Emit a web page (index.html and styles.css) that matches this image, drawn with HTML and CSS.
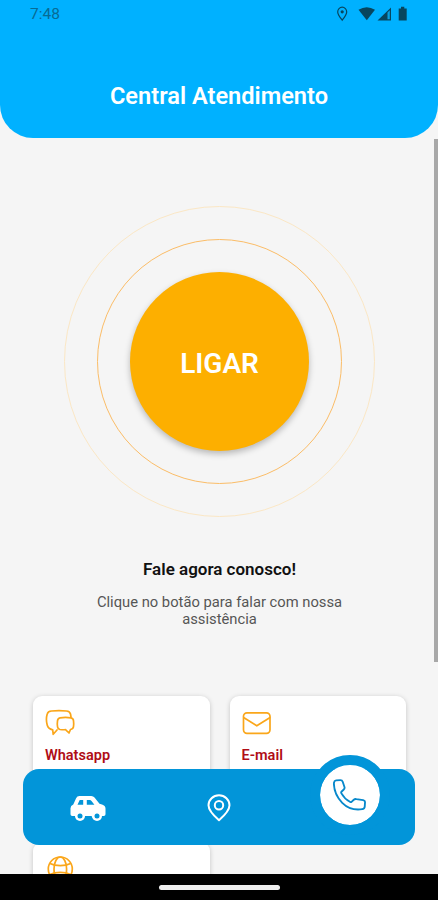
FILE: index.html
```html
<!DOCTYPE html>
<html lang="pt-BR">
  <head>
    <meta charset="UTF-8" />
    <meta name="viewport" content="width=device-width, initial-scale=1.0" />
    <title>Central Atendimento</title>
    <link rel="stylesheet" href="styles.css">
  </head>
  <body>
    <div class="screen">
      <header class="header">
        <div class="status-bar">
          <span class="time">7:48</span>
          <svg class="status-icons" width="74" height="16" viewBox="0 0 74 16">
            <path d="M6.200 14.200C3.700 11 1.700 8.500 1.700 5.900a4.500 4.700 0 0 1 9 0c0 2.600-2 5.100-4.500 8.300z" fill="none" stroke="#07465f" stroke-width="1.200" />
            <circle cx="6.200" cy="5.800" r="1.600" fill="#07465f" />
            <path d="M22.500 3.800Q30.800-1.200 39 3.800L30.800 14.200z" fill="#07465f" />
            <path d="M41.500 14.400L55 1.500v12.900z" fill="#07465f" />
            <path d="M51.500 6.500L53.800 4.300v9h-2.300z" fill="#08a0e0" />
            <path d="M62.700 2.400h2.300V.8h3.300v1.600h2.400v12h-8z" fill="#07465f" />
          </svg>
        </div>
        <h1>Central Atendimento</h1>
      </header>

      <main class="content">
        <div class="ring ring-outer">
          <div class="ring ring-inner">
            <button class="call-button" type="button">LIGAR</button>
          </div>
        </div>

        <h2>Fale agora conosco!</h2>
        <p class="description">Clique no botão para falar com nossa assistência</p>

        <div class="cards">
          <a class="card" href="#">
            <svg width="30" height="28" viewBox="0 0 30 28" fill="none" stroke="#faa61a" stroke-width="1.700" stroke-linejoin="round" stroke-linecap="round">
              <path d="M12 21L8.200 25.300 7.700 20.800C4 20 2.800 18.500 2.200 16 1.200 12.500 1.200 8.500 2.200 5Q2.800 2.300 6.500 2 14 1.300 21.500 2 24.800 2.300 25.500 5L26 8" />
              <path d="M15 8.800q5.500-.9 11 0 2.300.4 2.500 3 .4 3 0 5.700-.2 2.500-3 3L24 24 20.500 20.700q-3 .1-5.500-.2-2.200-.4-2.500-3-.4-3 0-5.700.3-2.600 2.500-3z" />
            </svg>
            <span class="card-title">Whatsapp</span>
          </a>
          <a class="card" href="#">
            <svg width="30" height="28" viewBox="0 0 30 28" fill="none" stroke="#faa61a" stroke-width="1.700" stroke-linejoin="round" stroke-linecap="round">
              <rect x="1.500" y="3.800" width="26.500" height="20.500" rx="3.500" />
              <path d="M2 8.800l12.800 8L27.700 8.800" />
            </svg>
            <span class="card-title">E-mail</span>
          </a>
          <a class="card" href="#">
            <svg width="30" height="28" viewBox="0 0 30 28" fill="none" stroke="#faa61a" stroke-width="1.700">
              <circle cx="15.300" cy="14" r="12" />
              <ellipse cx="15.300" cy="14" rx="6.300" ry="12" />
              <path d="M5 8.500q4 2.200 10.300 2.200T25.600 8.500M5 19.500q4-2.200 10.300-2.200T25.600 19.500" />
            </svg>
          </a>
        </div>
      </main>

      <div class="scrollbar"></div>

      <nav class="tab-bar">
        <a class="tab" href="#">
          <svg width="36" height="27" viewBox="0 0 36 27">
            <path d="M9.500 1h11.800q2 0 3.200 1.500l5 6.300 2.500.7q3.500 1 3.500 4v5.800q0 1.700-1.700 1.700h-3.100a5 5 0 0 1-9.200 0h-6.800a5 5 0 0 1-9.400 0H2.200Q.5 21 .5 19.300v-6q0-2.800 2.800-3.800l2.800-6.300Q7 1 9.500 1z" fill="#fff" />
            <circle cx="10" cy="21" r="5" fill="#fff" />
            <circle cx="27" cy="21" r="5" fill="#fff" />
            <path d="M9.700 5h3.500v4.700H7.500zM16.800 5h3q1 0 1.700.9l2.900 3.800h-7.600z" fill="#0295d9" />
            <circle cx="10" cy="21" r="2.500" fill="#0295d9" />
            <circle cx="27" cy="21" r="2.500" fill="#0295d9" />
          </svg>
        </a>
        <a class="tab" href="#">
          <svg width="24" height="28" viewBox="0 0 24 28" fill="none" stroke="#fff" stroke-width="2" stroke-linejoin="round">
            <path d="M12 26.300C6.500 21.500 1.500 16.500 1.500 11.300a10.500 10 0 0 1 21 0C22.500 16.500 17.500 21.500 12 26.300z" />
            <circle cx="12" cy="11.300" r="4.200" />
          </svg>
        </a>
        <a class="tab tab-active" href="#">
          <svg width="33" height="33" viewBox="0 0 34 34" fill="none" stroke="#0788cb" stroke-width="1.900" stroke-linejoin="round">
            <path d="M3.200 1.500L7.500 1.100Q9.400 1 10 2.800l1.800 5.400q.5 1.500-.7 2.600l-2.400 2.300c-.5.5-.4 1 0 1.700q3.100 5.600 8.700 8.700c.7.500 1.200.5 1.700 0l2.300-2.100q1.200-1 2.700-.7l7 1q2 .4 1.900 2.200l-.3 4.500q-.2 2.300-2.600 2.700Q18 33 9.500 24.500T.9 4.500Q1 1.800 3.200 1.500z" />
          </svg>
        </a>
      </nav>

      <footer class="system-bar">
        <div class="home-handle"></div>
      </footer>
    </div>
  </body>
</html>
```

FILE: styles.css
```css
* {
  box-sizing: border-box;
}

body {
  margin: 0;
  font-family: Roboto, Arial, sans-serif;
  background-color: #f5f5f5;
}

.screen {
  position: relative;
  display: flex;
  flex-direction: column;
  width: 438px;
  height: 900px;
  overflow: hidden;
}

/* Header */
.header {
  flex: none;
  height: 138px;
  background-color: #00b1ff;
  border-radius: 0 0 33px 33px;
  text-align: center;
}

.status-bar {
  display: flex;
  justify-content: space-between;
  align-items: center;
  height: 28px;
  padding: 0 28px 0 30px;
}

.time {
  font-size: 15.5px;
  color: #086b94;
}

h1 {
  margin: 54px 0 0;
  font-size: 23.6px;
  line-height: 28px;
  font-weight: 600;
  color: #fff;
}

/* Content */
.content {
  flex: 1;
  min-height: 0;
  overflow: hidden;
  display: flex;
  flex-direction: column;
  align-items: center;
  padding: 68px 32px 0 33px;
}

.ring {
  flex: none;
  display: flex;
  justify-content: center;
  align-items: center;
  border-radius: 50%;
}

.ring-outer {
  width: 311px;
  height: 311px;
  border: 1px solid #fbe7c5;
}

.ring-inner {
  width: 245px;
  height: 245px;
  border: 1px solid #fbbd68;
}

.call-button {
  width: 179px;
  height: 179px;
  padding: 4px 0 0;
  border: none;
  border-radius: 50%;
  background-color: #fdaf00;
  box-shadow: 0 3px 6px rgba(0, 0, 0, 0.25);
  color: #fff;
  font-family: inherit;
  font-size: 28px;
  font-weight: 600;
}

h2 {
  margin: 41px 0 0;
  font-size: 17px;
  line-height: 22px;
  font-weight: 600;
  color: #111;
}

.description {
  width: 270px;
  margin: 14px 0 0;
  font-size: 14.75px;
  line-height: 17px;
  text-align: center;
  color: #555;
}

.cards {
  align-self: stretch;
  display: grid;
  grid-template-columns: 1fr 1fr;
  grid-auto-rows: 126px;
  gap: 20px;
  margin-top: 68px;
}

.card {
  display: flex;
  flex-direction: column;
  padding: 13px 12px;
  background-color: #fff;
  border-radius: 9px;
  box-shadow: 0 1px 5px rgba(0, 0, 0, 0.2);
  text-decoration: none;
}

.card-title {
  margin-top: 10px;
  font-size: 14.5px;
  line-height: 18px;
  font-weight: 600;
  color: #b00d16;
}

.scrollbar {
  position: absolute;
  top: 139px;
  right: 0;
  width: 4px;
  height: 523px;
  background-color: #a8a8a8;
}

/* Floating tab bar */
.tab-bar {
  position: absolute;
  left: 23px;
  bottom: 55px;
  display: grid;
  grid-template-columns: repeat(3, 1fr);
  grid-template-rows: 76px;
  place-items: center;
  width: 392px;
  height: 76px;
  padding-top: 1px;
  border-radius: 16px;
  background-color: #0295d9;
}

.tab {
  display: flex;
  justify-content: center;
  align-items: center;
}

.tab-active {
  position: relative;
  top: -13px;
  width: 80px;
  height: 80px;
  border: 10px solid #0295d9;
  border-radius: 50%;
  background-color: #fff;
  background-clip: padding-box;
}

/* System bar */
.system-bar {
  flex: none;
  display: flex;
  justify-content: center;
  align-items: center;
  height: 26px;
  background-color: #000;
}

.home-handle {
  width: 121px;
  height: 5px;
  border-radius: 3px;
  background-color: #eee;
}
```
